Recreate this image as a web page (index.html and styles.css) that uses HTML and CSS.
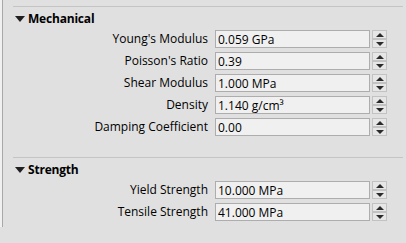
FILE: index.html
```html
<html lang="en"><head>
    <meta charset="UTF-8">
    <title>Material Properties</title>
    <link rel="stylesheet" href="styles.css">
</head>
<body>
    <div id="edge"></div>
    <div id="panel">
        <div class="section">
            <div class="divider"></div>
            <div class="heading"><span class="caret"></span>Mechanical</div>
            <div class="row">
                <label>Young's Modulus</label>
                <input type="text" value="0.059 GPa">
                <div class="spin"><span class="up"></span><span class="down"></span></div>
            </div>
            <div class="row">
                <label>Poisson's Ratio</label>
                <input type="text" value="0.39">
                <div class="spin"><span class="up"></span><span class="down"></span></div>
            </div>
            <div class="row">
                <label>Shear Modulus</label>
                <input type="text" value="1.000 MPa">
                <div class="spin"><span class="up"></span><span class="down"></span></div>
            </div>
            <div class="row">
                <label>Density</label>
                <input type="text" value="1.140 g/cm³">
                <div class="spin"><span class="up"></span><span class="down"></span></div>
            </div>
            <div class="row">
                <label>Damping Coefficient</label>
                <input type="text" value="0.00">
                <div class="spin"><span class="up"></span><span class="down"></span></div>
            </div>
        </div>

        <div class="section strength">
            <div class="divider"></div>
            <div class="heading"><span class="caret"></span>Strength</div>
            <div class="row">
                <label>Yield Strength</label>
                <input type="text" value="10.000 MPa">
                <div class="spin"><span class="up"></span><span class="down"></span></div>
            </div>
            <div class="row">
                <label>Tensile Strength</label>
                <input type="text" value="41.000 MPa">
                <div class="spin"><span class="up"></span><span class="down"></span></div>
            </div>
        </div>
    </div>
</body>
</html>
```

FILE: styles.css
```css
body {
    display: flex;
    margin: 0;
    padding: 0;
    height: 243px;
    background-color: #e0e0e0;
    font-family: 'Open Sans', 'Noto Sans', sans-serif;
    font-size: 12px;
    color: #000;
    overflow: hidden;
}

#edge {
    width: 2px;
    height: 227px;
    background-color: #f0f0f0;
    border-right: 1px solid #a8a8a8;
}

#panel {
    flex: 1;
    padding-top: 6px;
}

.divider {
    height: 1px;
    margin-left: 10px;
    margin-right: 3px;
    background-color: #c4c4c4;
}

.heading {
    display: flex;
    align-items: center;
    height: 23px;
    padding-left: 12px;
    font-weight: bold;
    font-size: 12px;
    letter-spacing: -0.2px;
}

.caret {
    width: 0;
    height: 0;
    border-left: 5px solid transparent;
    border-right: 5px solid transparent;
    border-top: 6px solid #202020;
    margin-right: 3px;
    margin-top: 1px;
}

.row {
    display: grid;
    grid-template-columns: 1fr 155px 16px;
    column-gap: 1px;
    height: 18px;
    margin-bottom: 4px;
    margin-right: 19px;
}

.row label {
    text-align: right;
    line-height: 18px;
    padding-right: 6px;
    white-space: nowrap;
}

input[type="text"] {
    box-sizing: border-box;
    width: 155px;
    height: 18px;
    margin: 0;
    padding: 0 2px;
    border: 1px solid #adadad;
    background-color: #f0f0f0;
    font-family: 'Open Sans', 'Noto Sans', sans-serif;
    font-size: 12px;
    color: #000;
}

.spin {
    display: flex;
    flex-direction: column;
    margin-left: 1px;
}

.spin span {
    box-sizing: border-box;
    height: 9px;
    border: 1px solid #c2c2c2;
    background-color: #e6e6e6;
    display: flex;
    align-items: center;
    justify-content: center;
}

.spin .up::after {
    content: "";
    border-left: 4px solid transparent;
    border-right: 4px solid transparent;
    border-bottom: 4px solid #2a2a2a;
}

.spin .down::after {
    content: "";
    border-left: 4px solid transparent;
    border-right: 4px solid transparent;
    border-top: 4px solid #2a2a2a;
}

.strength {
    margin-top: 21px;
}
```
